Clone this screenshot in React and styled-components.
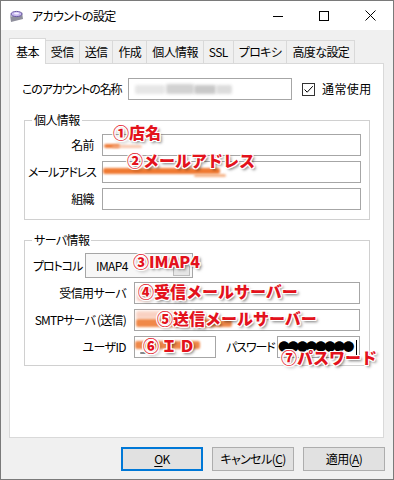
import React from 'react'
import styled, { createGlobalStyle } from 'styled-components'

const GlobalStyle = createGlobalStyle`
  html, body {
    margin: 0;
    padding: 0;
    background: #ffffff;
  }
  body {
    font-family: "Noto Sans CJK JP", "Noto Sans", sans-serif;
    font-size: 12px;
    font-feature-settings: "palt";
    letter-spacing: -0.6px;
    color: #000;
  }
  * { box-sizing: border-box; }
`;

const Window = styled.div`
  width: 394px;
  height: 480px;
  border: 1px solid #7a7a7a;
  background: #f0f0f0;
  display: flex;
  flex-direction: column;
`;

const TitleBar = styled.div`
  height: 29px;
  flex: 0 0 29px;
  background: #fff;
  display: flex;
  align-items: center;
  padding-left: 8px;

  .title {
    margin-left: 8px;
    line-height: 16px;
    flex: 1;
  }
`;

const CaptionButton = styled.div`
  width: 46px;
  height: 29px;
  display: flex;
  align-items: center;
  justify-content: center;
`;

const Body = styled.div`
  flex: 1;
  display: flex;
  flex-direction: column;
  padding: 8px 9px 0 8px;
`;

const TabStrip = styled.div`
  display: flex;
  align-items: flex-end;
  height: 25px;
`;

const Tab = styled.div`
  position: relative;
  height: ${p => (p.$active ? '26px' : '23px')};
  margin-bottom: ${p => (p.$active ? '-1px' : '0')};
  margin-left: -1px;
  padding: 0 ${p => (p.$active ? '6px' : '5px')};
  background: ${p => (p.$active ? '#fff' : '#f0f0f0')};
  border: 1px solid #d9d9d9;
  border-bottom: none;
  z-index: ${p => (p.$active ? 2 : 1)};
  display: flex;
  align-items: center;
  line-height: 16px;
  white-space: nowrap;

  &:first-child { margin-left: 0; }
`;

const Panel = styled.div`
  height: 375px;
  flex: 0 0 375px;
  background: #fff;
  border: 1px solid #d9d9d9;
  padding: 14px 13px 0 12px;
  display: flex;
  flex-direction: column;
`;

const NameRow = styled.div`
  display: flex;
  align-items: center;
  height: 22px;
`;

const Label = styled.div`
  width: ${p => p.$w || 'auto'};
  flex: 0 0 ${p => p.$w || 'auto'};
  text-align: ${p => p.$align || 'left'};
  line-height: 16px;
  white-space: nowrap;
  letter-spacing: ${p => p.$ls ?? -0.6}px;
  margin-left: ${p => p.$ml || 0}px;
  margin-right: ${p => p.$mr || 0}px;
`;

const Field = styled.div`
  position: relative;
  width: ${p => p.$w || 'auto'};
  flex: ${p => (p.$w ? `0 0 ${p.$w}` : '1 1 0')};
  min-width: 0;
  height: ${p => p.$h || 22}px;
`;

const TextBox = styled.div`
  width: 100%;
  height: 100%;
  background: #fff;
  border: 1px solid #a6a6a6;
  display: flex;
  align-items: center;
  padding-left: 2px;
  overflow: hidden;
`;

const CheckBox = styled.div`
  width: 13px;
  height: 13px;
  flex: 0 0 13px;
  margin-left: 10px;
  border: 1px solid #333;
  background: #fff;
  display: flex;
  align-items: center;
  justify-content: center;
`;

const Group = styled.fieldset`
  margin: 12px 0 0 2px;
  padding: ${p => p.$pad || '6px 8px 9px 3px'};
  border: 1px solid #d0d0d0;
  min-width: 0;

  legend {
    margin-left: 4px;
    padding: 0 2px;
    line-height: 16px;
  }
`;

const FormGrid = styled.div`
  display: grid;
  grid-template-columns: ${p => p.$label}px minmax(0, 1fr);
  column-gap: 8px;
  row-gap: 5px;
  align-items: center;
  margin-top: ${p => p.$mt || 0}px;
`;

const InlineRow = styled.div`
  display: flex;
  align-items: center;
  padding-left: ${p => p.$pl || 0}px;
  min-width: 0;
`;

const Combo = styled.div`
  position: relative;
  width: 100%;
  height: 100%;
  border: 1px solid #a6a6a6;
  background: #f7f7f7;
  display: flex;
  align-items: center;
  padding-left: 10px;

  .drop {
    position: absolute;
    right: 2px;
    top: 8px;
    width: 17px;
    height: 14px;
    border: 1px solid #bdbdbd;
    background: #e6e6e6;
  }
`;

const PasswordBox = styled(TextBox)`
  padding-left: 0;

  .dots {
    font-family: "Noto Sans CJK JP", sans-serif;
    font-feature-settings: normal;
    font-size: 12px;
    letter-spacing: -2.8px;
    line-height: 16px;
  }
  .caret {
    width: 1px;
    height: 15px;
    background: #000;
    margin-left: 4px;
  }
`;

const Note = styled.span`
  position: absolute;
  left: ${p => p.$x}px;
  top: ${p => p.$y}px;
  z-index: 5;
  white-space: nowrap;
  font-family: "Noto Sans CJK JP", sans-serif;
  font-feature-settings: normal;
  font-weight: 900;
  font-size: 16px;
  line-height: 20px;
  color: #e3121c;
  letter-spacing: ${p => p.$ls || 0}px;
  text-shadow:
    -1px -1px 0 #fff, 1px -1px 0 #fff, -1px 1px 0 #fff, 1px 1px 0 #fff,
    0 -1px 0 #fff, 0 1px 0 #fff, -1px 0 0 #fff, 1px 0 0 #fff,
    2px 2px 3px rgba(0, 0, 0, 0.55);
`;

const Smudge = styled.span`
  position: absolute;
  left: ${p => p.$x}px;
  top: ${p => p.$y}px;
  width: ${p => p.$w}px;
  height: ${p => p.$h}px;
  background: ${p => p.$c};
  opacity: ${p => p.$o || 1};
  filter: blur(${p => p.$b || 1}px);
  border-radius: 2px;
  z-index: 3;
`;

const ButtonRow = styled.div`
  display: flex;
  justify-content: flex-end;
  gap: 9px;
  margin: 9px -1px 0 0;
`;

const Button = styled.div`
  width: 82px;
  height: 24px;
  background: #e1e1e1;
  border: ${p => (p.$default ? '2px solid #0078d7' : '1px solid #adadad')};
  display: flex;
  align-items: center;
  justify-content: center;
  line-height: 16px;

  u { text-decoration: underline; text-underline-offset: 2px; }
`;

const AppIcon = () => (
  <svg width="15" height="14" viewBox="0 0 15 14">
    <path d="M1 6 L13 3 L14 10 L2 13 Z" fill="#8f8f9c" />
    <path d="M1 6 L13 3 L13.4 5 L1.4 8 Z" fill="#c4c4cc" />
    <ellipse cx="7.5" cy="5" rx="5.5" ry="2.6" fill="#c9b9ef" stroke="#6b5aa6" strokeWidth="1" />
    <ellipse cx="7.5" cy="4.6" rx="2.5" ry="1" fill="#f4f0ff" />
  </svg>
);

const tabs = ['基本', '受信', '送信', '作成', '個人情報', 'SSL', 'プロキシ', '高度な設定'];

const App = () => {
  return (
    <>
      <GlobalStyle />
      <Window>
        <TitleBar>
          <AppIcon />
          <span className="title">アカウントの設定</span>
          <CaptionButton>
            <svg width="10" height="10"><line x1="0" y1="5.5" x2="10" y2="5.5" stroke="#000" strokeWidth="1" /></svg>
          </CaptionButton>
          <CaptionButton>
            <svg width="10" height="10"><rect x="0.5" y="0.5" width="9" height="9" fill="none" stroke="#000" strokeWidth="1" /></svg>
          </CaptionButton>
          <CaptionButton>
            <svg width="11" height="11"><path d="M0.5 0.5 L10.5 10.5 M10.5 0.5 L0.5 10.5" stroke="#000" strokeWidth="1" /></svg>
          </CaptionButton>
        </TitleBar>

        <Body>
          <TabStrip>
            {tabs.map((t, i) => (
              <Tab key={t} $active={i === 0}>{t}</Tab>
            ))}
          </TabStrip>

          <Panel>
            <NameRow>
              <Label $w="106px" $ls={-1.1}>このアカウントの名称</Label>
              <Field $w="164px">
                <TextBox />
                <Smudge $x={7} $y={7} $w={30} $h={9} $c="#e6e6e6" $b={1.5} />
                <Smudge $x={38} $y={6} $w={28} $h={10} $c="#d2d2d2" $b={1.5} />
                <Smudge $x={66} $y={7} $w={22} $h={9} $c="#c8c8c8" $b={1.5} />
                <Smudge $x={88} $y={7} $w={16} $h={9} $c="#dcdcdc" $b={1.5} />
              </Field>
              <CheckBox>
                <svg width="11" height="11" viewBox="0 0 11 11">
                  <path d="M1.5 5.5 L4.2 8.2 L9.8 2.2" fill="none" stroke="#000" strokeWidth="1" />
                </svg>
              </CheckBox>
              <Label $ml={7} $ls={0.4}>通常使用</Label>
            </NameRow>

            <Group>
              <legend>個人情報</legend>
              <FormGrid $label={66}>
                <Label $align="right">名前</Label>
                <Field>
                  <TextBox />
                  <Smudge $x={2} $y={10} $w={16} $h={4} $c="#ee7a36" />
                  <Smudge $x={10} $y={11} $w={30} $h={3} $c="#f6b08a" $o={0.7} />
                  <Note $x={11} $y={-12}>①店名</Note>
                </Field>
                <Label $align="right" $ls={-1.1}>メールアドレス</Label>
                <Field>
                  <TextBox />
                  <Smudge $x={1} $y={7} $w={117} $h={6} $c="#f07a32" />
                  <Smudge $x={92} $y={13} $w={32} $h={3} $c="#f3a069" $o={0.8} />
                  <Note $x={25} $y={-11}>②メールアドレス</Note>
                </Field>
                <Label $align="right">組織</Label>
                <Field>
                  <TextBox />
                </Field>
              </FormGrid>
            </Group>

            <Group $pad="5px 9px 7px 3px">
              <legend>サーバ情報</legend>
              <InlineRow $pl={5}>
                <Label $w="52px" $ls={-1.1}>プロトコル</Label>
                <Field $w="108px" $h={25}>
                  <Combo>
                    IMAP4
                    <span className="drop" />
                  </Combo>
                  <Note $x={48} $y={-2}>③IMAP4</Note>
                </Field>
              </InlineRow>
              <FormGrid $label={98} $mt={4}>
                <Label $align="right">受信用サーバ</Label>
                <Field>
                  <TextBox />
                  <Smudge $x={3} $y={5} $w={13} $h={14} $c="#f4b4a2" $o={0.8} $b={1.5} />
                  <Note $x={4} $y={-1}>④受信メールサーバー</Note>
                </Field>
                <Label $align="right" $ls={-0.8}>SMTPサーバ&nbsp;(送信)</Label>
                <Field>
                  <TextBox />
                  <Smudge $x={2} $y={2} $w={40} $h={8} $c="#f8c6b4" $o={0.8} $b={1.5} />
                  <Smudge $x={2} $y={10} $w={96} $h={8} $c="#f08848" />
                  <Note $x={23} $y={-1}>⑤送信メールサーバー</Note>
                </Field>
                <Label $align="right">ユーザID</Label>
                <InlineRow>
                  <Field $w="82px">
                    <TextBox />
                    <Smudge $x={1} $y={5} $w={65} $h={8} $c="#f08848" />
                    <Smudge $x={6} $y={16} $w={6} $h={2} $c="#888" $b={0.5} />
                    <Note $x={9} $y={-1} $ls={2}>⑥ＩＤ</Note>
                  </Field>
                  <Label $w="46px" $ml={10} $mr={5} $ls={-1.1}>パスワード</Label>
                  <Field>
                    <PasswordBox>
                      <span className="dots">●●●●●●●●</span>
                      <span className="caret" />
                    </PasswordBox>
                    <Note $x={4} $y={11}>⑦パスワード</Note>
                  </Field>
                </InlineRow>
              </FormGrid>
            </Group>
          </Panel>

          <ButtonRow>
            <Button $default><u>O</u>K</Button>
            <Button>キャンセル(<u>C</u>)</Button>
            <Button>適用(<u>A</u>)</Button>
          </ButtonRow>
        </Body>
      </Window>
    </>
  )
}

export default App
